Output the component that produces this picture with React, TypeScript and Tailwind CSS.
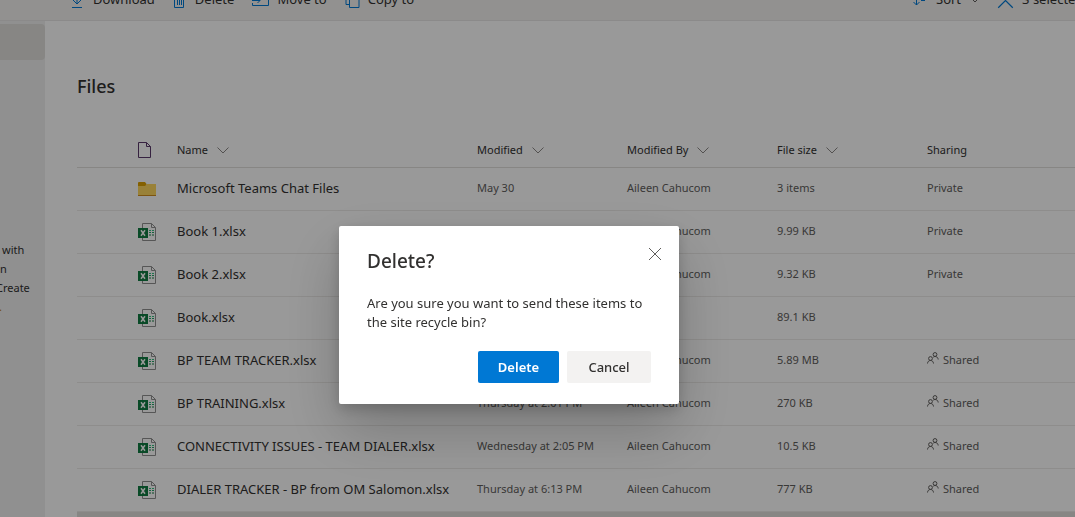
import React from 'react';

interface FileRow {
  name: string;
  modified: string;
  modifiedBy: string;
  size: string;
  sharing: string;
  kind: 'folder' | 'excel';
}

const files: FileRow[] = [
  { name: 'Microsoft Teams Chat Files', modified: 'May 30', modifiedBy: 'Aileen Cahucom', size: '3 items', sharing: 'Private', kind: 'folder' },
  { name: 'Book 1.xlsx', modified: '', modifiedBy: 'Aileen Cahucom', size: '9.99 KB', sharing: 'Private', kind: 'excel' },
  { name: 'Book 2.xlsx', modified: '', modifiedBy: 'Aileen Cahucom', size: '9.32 KB', sharing: 'Private', kind: 'excel' },
  { name: 'Book.xlsx', modified: '', modifiedBy: '', size: '89.1 KB', sharing: '', kind: 'excel' },
  { name: 'BP TEAM TRACKER.xlsx', modified: '', modifiedBy: 'Aileen Cahucom', size: '5.89 MB', sharing: 'Shared', kind: 'excel' },
  { name: 'BP TRAINING.xlsx', modified: 'Thursday at 2:01 PM', modifiedBy: 'Aileen Cahucom', size: '270 KB', sharing: 'Shared', kind: 'excel' },
  { name: 'CONNECTIVITY ISSUES - TEAM DIALER.xlsx', modified: 'Wednesday at 2:05 PM', modifiedBy: 'Aileen Cahucom', size: '10.5 KB', sharing: 'Shared', kind: 'excel' },
  { name: 'DIALER TRACKER - BP from OM Salomon.xlsx', modified: 'Thursday at 6:13 PM', modifiedBy: 'Aileen Cahucom', size: '777 KB', sharing: 'Shared', kind: 'excel' },
];

const ExcelIcon = () => (
  <svg width="18" height="18" viewBox="0 0 18 18" fill="none">
    <path d="M4.5 .5h9l4 4v13h-13z" stroke="#909090" />
    <path d="M13.5 .5v4h4" stroke="#909090" />
    <path d="M11 7.5h2M14 7.5h2" stroke="#33c481" />
    <path d="M11 9.5h2M14 9.5h2" stroke="#21a366" />
    <path d="M11 12h2M14 12h2" stroke="#107c41" />
    <path d="M0 5h10v10H0z" fill="#107c41" />
    <path d="M3 7.200l4 5.600M7 7.200l-4 5.600" stroke="#fff" strokeWidth="1.5" />
  </svg>
);

const FolderIcon = () => (
  <svg width="18" height="14" viewBox="0 0 18 14">
    <path d="M0 1q0-1 1-1h6l1.500 2v3H0z" fill="#dca000" />
    <path d="M0 4h7l2-2h9v12H0z" fill="#ffd75e" />
    <path d="M0 13h18v1H0z" fill="#d08c1c" />
  </svg>
);

const PageIcon = () => (
  <svg width="13" height="16" viewBox="0 0 13 16" fill="none" stroke="#5b3a6c">
    <path d="M.5 .5h8l4 4v11H.5z" />
    <path d="M8.500 .5v4h4" />
  </svg>
);

const Chevron = () => (
  <svg width="12" height="7" viewBox="0 0 12 7" fill="none" stroke="#8a8886">
    <path d="M.5 .5L6 6l5.500-5.500" />
  </svg>
);

const PeopleIcon = () => (
  <svg width="12" height="12" viewBox="0 0 12 12" fill="none" stroke="#605e5c" className="mb-1">
    <circle cx="8" cy="2.500" r="1.900" />
    <circle cx="3.500" cy="6.500" r="1.900" />
    <path d="M.5 11.500c.200-2 1.300-3 3-3s2.800 1 3 3M6.300 5.200c.500-.500 1-.700 1.700-.700 1.800 0 3 1 3.200 3" />
  </svg>
);

const DownloadIcon = () => (
  <svg width="12" height="16" viewBox="0 0 12 16" fill="none" stroke="#0078d4">
    <path d="M6 0v12M1 7l5 5 5-5M1 15.500h10" />
  </svg>
);

const TrashIcon = () => (
  <svg width="12" height="16" viewBox="0 0 12 16" fill="none" stroke="#0078d4">
    <path d="M0 2.500h12M4 2.500v-2h4v2M1.500 2.500v13h9v-13M4.500 5v8M6.500 5v8M8.500 5v8" />
  </svg>
);

const MoveIcon = () => (
  <svg width="17" height="14" viewBox="0 0 17 14" fill="none" stroke="#0078d4">
    <path d="M.5 6V.5h5l2 2h9v10H.5V10M0 7.500h8M5.500 5L8 7.500 5.500 10" />
  </svg>
);

const CopyIcon = () => (
  <svg width="15" height="16" viewBox="0 0 15 16" fill="none" stroke="#0078d4">
    <path d="M4.500 3.500h6l3.500 3v9H4.500zM4.500 12.500H1V.500h6l3 3" />
  </svg>
);

const SortIcon = () => (
  <svg width="13" height="14" viewBox="0 0 13 14" fill="none" stroke="#0078d4">
    <path d="M3.500 0v12M.500 9l3 3 3-3M8 7.500h4M8 3.500h5" />
  </svg>
);

const CloseIcon = ({ className, size }: { className: string; size: number }) => (
  <svg width={size} height={size} viewBox="0 0 14 14" fill="none" stroke="currentColor" className={className}>
    <path d="M1 1l12 12M13 1L1 13" />
  </svg>
);

const CommandBar = () => (
  <header className="h-[21px] overflow-hidden flex items-end bg-[#f3f2f1] border-b border-[#e8e7e6] text-[13px]">
    <div className="h-[40px] w-full shrink-0 flex items-center justify-between pl-[71px] whitespace-nowrap">
      <div className="flex items-center gap-[18px]">
        <button className="flex items-center gap-[10px]"><DownloadIcon />Download</button>
        <button className="flex items-center gap-[10px]"><TrashIcon />Delete</button>
        <button className="flex items-center gap-2"><MoveIcon />Move to</button>
        <button className="flex items-center gap-2"><CopyIcon />Copy to</button>
      </div>
      <div className="w-[162px] shrink-0 flex items-center gap-[18px] overflow-hidden">
        <button className="flex shrink-0 items-center gap-[10px]">
          <SortIcon />
          Sort
          <svg width="8" height="5" viewBox="0 0 8 5" fill="none" stroke="#605e5c"><path d="M.5 .5L4 4 7.500 .5" /></svg>
        </button>
        <button className="flex shrink-0 items-center gap-2">
          <CloseIcon className="text-[#0078d4]" size={17} />
          3 selected
        </button>
      </div>
    </div>
  </header>
);

const Sidebar = () => (
  <aside className="w-[45px] shrink-0 overflow-hidden bg-[#f0f0f0] pt-[3px]">
    <div className="h-9 rounded-r-sm bg-[#e1dfdd]" />
    <div className="mt-[180px] -ml-1 flex flex-col text-[11px] leading-[19px] text-[#323130] whitespace-nowrap">
      <span className="pl-[6px]">with</span>
      <span className="pl-1">n</span>
      <span>Create</span>
      <a href="#" className="pl-[3px] text-[#c08020]">.</a>
    </div>
  </aside>
);

const columns = [
  { title: 'Name', sortable: true },
  { title: 'Modified', sortable: true },
  { title: 'Modified By', sortable: true },
  { title: 'File size', sortable: true },
  { title: 'Sharing', sortable: false },
];

const FileTable = () => (
  <table className="w-full table-fixed text-left text-[11px] text-[#605e5c]">
    <colgroup>
      <col className="w-[60px]" />
      <col className="w-10" />
      <col className="w-[300px]" />
      <col className="w-[150px]" />
      <col className="w-[150px]" />
      <col className="w-[150px]" />
      <col />
    </colgroup>
    <thead>
      <tr className="h-[35px] border-b border-[#e1dfdd] text-[#323130]">
        <th aria-label="Select" />
        <th aria-label="File type" className="pt-0.5 pl-px"><PageIcon /></th>
        {columns.map((col) => (
          <th key={col.title} className="pt-0.5 font-normal">
            <span className="flex items-center gap-[9px]">
              {col.title}
              {col.sortable && <Chevron />}
            </span>
          </th>
        ))}
      </tr>
    </thead>
    <tbody>
      {files.map((file) => (
        <tr key={file.name} className="h-[43px] border-b border-[#edebe9]">
          <td />
          <td className="pl-px">{file.kind === 'folder' ? <FolderIcon /> : <ExcelIcon />}</td>
          <td className="pt-px text-[13px] text-[#323130] whitespace-nowrap">{file.name}</td>
          <td className="pb-px whitespace-nowrap">{file.modified}</td>
          <td className="pb-px">{file.modifiedBy}</td>
          <td className="pb-px">{file.size}</td>
          <td className="pb-px">
            <span className="flex items-center gap-1">
              {file.sharing === 'Shared' && <PeopleIcon />}
              {file.sharing}
            </span>
          </td>
        </tr>
      ))}
      {/* Selected row */}
      <tr className="h-[43px] bg-[#e1dfdd]">
        <td colSpan={7} />
      </tr>
    </tbody>
  </table>
);

const DeleteDialog = () => (
  <div className="fixed inset-0 flex items-center justify-center bg-black/40 pt-[113px] pr-[57px]">
    <div
      role="dialog"
      aria-labelledby="dialog-title"
      className="w-[340px] rounded-xs bg-white px-7 py-[21px] text-[#323130] shadow-[0_26px_58px_rgba(0,0,0,0.22),0_5px_14px_rgba(0,0,0,0.18)]"
    >
      <div className="flex items-start justify-between">
        <h2 id="dialog-title" className="text-[19px] leading-7 font-medium">Delete?</h2>
        <button aria-label="Close" className="-mr-[11px]">
          <CloseIcon className="text-[#605e5c]" size={14} />
        </button>
      </div>
      <p className="mt-[19px] text-[13px] leading-[19px]">
        Are you sure you want to send these items to the site recycle bin?
      </p>
      <div className="mt-[19px] flex justify-end gap-2 text-[13px]">
        <button className="h-8 w-[81px] rounded-xs bg-[#0078d4] pt-px font-semibold text-white">Delete</button>
        <button className="h-8 w-[84px] rounded-xs bg-[#f3f2f1] pt-px font-medium">Cancel</button>
      </div>
    </div>
  </div>
);

export default function App() {
  return (
    <div className="h-screen overflow-hidden flex flex-col bg-white font-['Noto_Sans','Open_Sans',sans-serif] text-[#323130]">
      <CommandBar />
      <div className="flex min-h-0 flex-1">
        <Sidebar />
        <main className="min-w-0 flex-1 overflow-hidden pl-8">
          <h1 className="mt-[51px] mb-8 text-[18px] leading-7 font-medium">Files</h1>
          <FileTable />
        </main>
      </div>
      <DeleteDialog />
    </div>
  );
}
